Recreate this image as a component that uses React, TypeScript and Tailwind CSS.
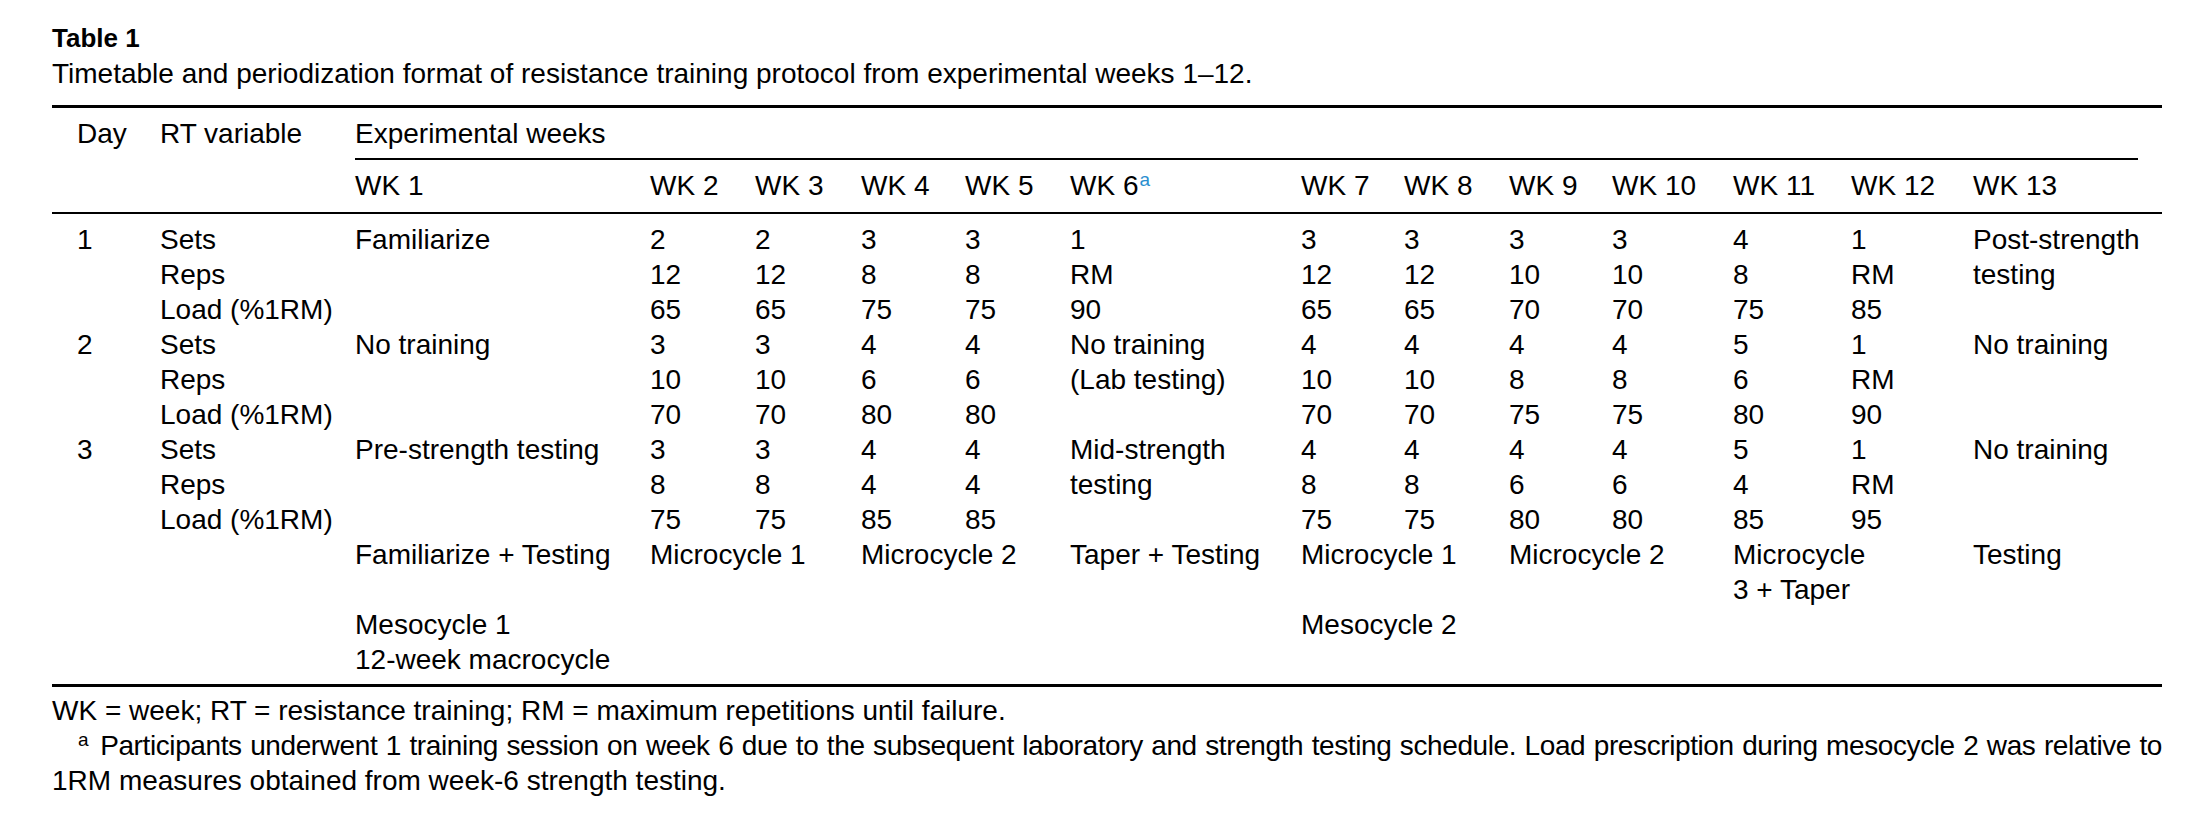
const cols =
  'grid grid-cols-[108px_195px_295px_105px_106px_104px_105px_231px_103px_105px_103px_121px_118px_122px_189px]'

const weeks = ['WK 1', 'WK 2', 'WK 3', 'WK 4', 'WK 5', 'WK 6', 'WK 7', 'WK 8', 'WK 9', 'WK 10', 'WK 11', 'WK 12', 'WK 13']

// day, variable, wk1..wk13
const rows: string[][] = [
  ['1', 'Sets', 'Familiarize', '2', '2', '3', '3', '1', '3', '3', '3', '3', '4', '1', 'Post-strength'],
  ['', 'Reps', '', '12', '12', '8', '8', 'RM', '12', '12', '10', '10', '8', 'RM', 'testing'],
  ['', 'Load (%1RM)', '', '65', '65', '75', '75', '90', '65', '65', '70', '70', '75', '85', ''],
  ['2', 'Sets', 'No training', '3', '3', '4', '4', 'No training', '4', '4', '4', '4', '5', '1', 'No training'],
  ['', 'Reps', '', '10', '10', '6', '6', '(Lab testing)', '10', '10', '8', '8', '6', 'RM', ''],
  ['', 'Load (%1RM)', '', '70', '70', '80', '80', '', '70', '70', '75', '75', '80', '90', ''],
  ['3', 'Sets', 'Pre-strength testing', '3', '3', '4', '4', 'Mid-strength', '4', '4', '4', '4', '5', '1', 'No training'],
  ['', 'Reps', '', '8', '8', '4', '4', 'testing', '8', '8', '6', '6', '4', 'RM', ''],
  ['', 'Load (%1RM)', '', '75', '75', '85', '85', '', '75', '75', '80', '80', '85', '95', ''],
]

function Cell({ children, className = '' }: { children?: React.ReactNode; className?: string }) {
  return <div className={`whitespace-nowrap ${className}`}>{children}</div>
}

export default function App() {
  return (
    <div className="min-h-screen bg-white text-black font-['Liberation_Sans',Arial,sans-serif] text-[28px] leading-[35px]">
      <div className="ml-[52px] w-[2110px] pt-[21px]">
        <div className="text-[26px] font-bold">Table 1</div>
        <div>Timetable and periodization format of resistance training protocol from experimental weeks 1–12.</div>

        <div className="mt-[14px] border-t-[3px] border-black">
          {/* header */}
          <div className={`${cols} border-b-2 border-black pb-[9px]`}>
            <Cell className="pl-[25px] pt-[8px]">Day</Cell>
            <Cell className="pt-[8px]">RT variable</Cell>
            <Cell className="col-span-13 mr-[24px] border-b-2 border-black pt-[8px] pb-[7px]">Experimental weeks</Cell>
            <Cell />
            <Cell />
            {weeks.map((w) => (
              <Cell key={w} className="pt-[8px]">
                {w}
                {w === 'WK 6' && (
                  <sup className="ml-[1px] text-[19px] text-[#2a8fcf]">a</sup>
                )}
              </Cell>
            ))}
          </div>

          {/* body */}
          <div className={`${cols} border-b-[3px] border-black pt-[8px] pb-[7px]`}>
            {rows.map((r, i) =>
              r.map((c, j) => (
                <Cell key={`${i}-${j}`} className={j === 0 ? 'pl-[25px]' : ''}>
                  {c}
                </Cell>
              ))
            )}

            <Cell />
            <Cell />
            <Cell>Familiarize + Testing</Cell>
            <Cell className="col-span-2">Microcycle 1</Cell>
            <Cell className="col-span-2">Microcycle 2</Cell>
            <Cell>Taper + Testing</Cell>
            <Cell className="col-span-2">Microcycle 1</Cell>
            <Cell className="col-span-2">Microcycle 2</Cell>
            <Cell className="col-span-2">
              Microcycle
              <br />3 + Taper
            </Cell>
            <Cell>Testing</Cell>

            <Cell />
            <Cell />
            <Cell className="col-span-4">Mesocycle 1</Cell>
            <Cell />
            <Cell />
            <Cell className="col-span-7">Mesocycle 2</Cell>

            <Cell />
            <Cell />
            <Cell className="col-span-13">12-week macrocycle</Cell>
          </div>
        </div>

        <div className="pt-[6px]">
          <div>WK = week; RT = resistance training; RM = maximum repetitions until failure.</div>
          <div className="whitespace-nowrap pl-[26px] tracking-[-0.4px] [text-align-last:justify]">
            <sup className="mr-[12px] text-[19px]">a</sup>Participants underwent 1 training session on week 6 due to the subsequent laboratory and strength testing schedule. Load prescription during mesocycle 2 was relative to
          </div>
          <div>1RM measures obtained from week-6 strength testing.</div>
        </div>
      </div>
    </div>
  )
}
